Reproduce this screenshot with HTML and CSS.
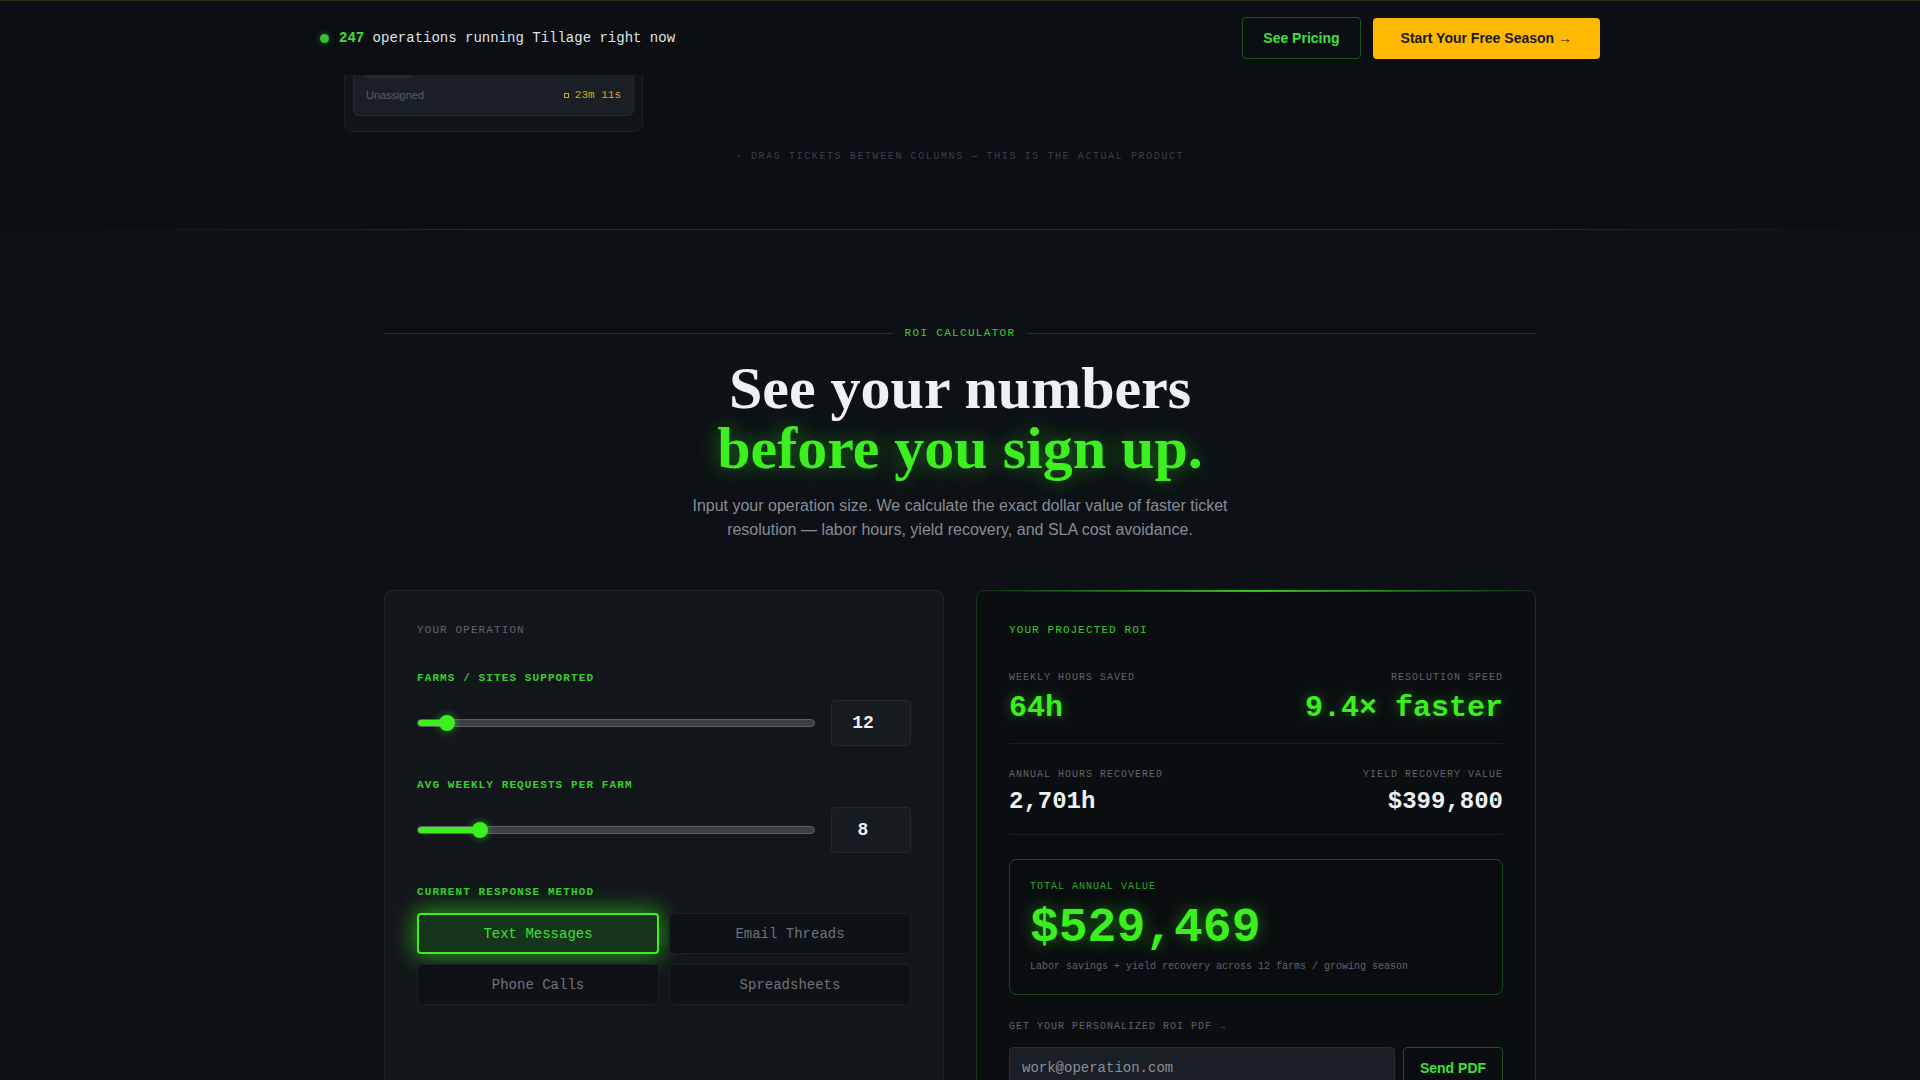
FILE: index.html
```html
<!DOCTYPE html>
<html lang="en">
<head>
  <meta charset="UTF-8" />
  <meta name="viewport" content="width=device-width, initial-scale=1.0" />
  <title>Tillage — ROI Calculator</title>
  <link rel="stylesheet" href="styles.css">
</head>
<body>
  <header class="topbar">
    <div class="topbar-inner">
      <div class="live">
        <span class="live-dot"></span>
        <span><strong>247</strong> operations running Tillage right now</span>
      </div>
      <div class="topbar-actions">
        <a class="btn btn-outline" href="#pricing">See Pricing</a>
        <a class="btn btn-amber" href="#start">Start Your Free Season →</a>
      </div>
    </div>
  </header>

  <section class="demo">
    <div class="demo-inner">
      <div class="board">
        <div class="board-col">
          <div class="ticket">
            <div class="ticket-tags">
              <span class="tag">Pivot 7</span>
              <span class="tag-meta">··</span>
            </div>
            <div class="ticket-foot">
              <span class="ticket-owner">Unassigned</span>
              <span class="ticket-timer"><i class="timer-icon"></i>23m 11s</span>
            </div>
          </div>
        </div>
      </div>
      <p class="demo-caption">· Drag tickets between columns — this is the actual product</p>
    </div>
  </section>
  <div class="rule"></div>

  <section class="roi">
    <div class="eyebrow"><span>ROI Calculator</span></div>
    <h2 class="roi-heading">See your numbers<br><span class="glow">before you sign up.</span></h2>
    <p class="roi-sub">Input your operation size. We calculate the exact dollar value of faster ticket resolution — labor hours, yield recovery, and SLA cost avoidance.</p>

    <div class="roi-grid">
      <div class="card card-input">
        <div class="card-title">Your Operation</div>

        <div class="field">
          <label class="field-label" for="farms">Farms / Sites Supported</label>
          <div class="slider-row">
            <input class="range" id="farms" type="range" min="1" max="200" value="12" style="--fill: 7.3%">
            <input class="num" type="text" value="12">
          </div>
        </div>

        <div class="field">
          <label class="field-label" for="requests">Avg Weekly Requests per Farm</label>
          <div class="slider-row">
            <input class="range" id="requests" type="range" min="1" max="50" value="8" style="--fill: 15.7%">
            <input class="num" type="text" value="8">
          </div>
        </div>

        <div class="field">
          <div class="field-label field-label-tight">Current Response Method</div>
          <div class="methods">
            <button class="method active">Text Messages</button>
            <button class="method">Email Threads</button>
            <button class="method">Phone Calls</button>
            <button class="method">Spreadsheets</button>
          </div>
        </div>
      </div>

      <div class="card card-output">
        <div class="card-title card-title-green">Your Projected ROI</div>

        <div class="stat-row">
          <div class="stat">
            <div class="stat-label">Weekly Hours Saved</div>
            <div class="stat-value stat-big green">64h</div>
          </div>
          <div class="stat stat-right">
            <div class="stat-label">Resolution Speed</div>
            <div class="stat-value stat-big green">9.4× faster</div>
          </div>
        </div>

        <div class="stat-row">
          <div class="stat">
            <div class="stat-label">Annual Hours Recovered</div>
            <div class="stat-value stat-mid">2,701h</div>
          </div>
          <div class="stat stat-right">
            <div class="stat-label">Yield Recovery Value</div>
            <div class="stat-value stat-mid">$399,800</div>
          </div>
        </div>

        <div class="total">
          <div class="total-label">Total Annual Value</div>
          <div class="total-value">$529,469</div>
          <div class="total-note">Labor savings + yield recovery across 12 farms / growing season</div>
        </div>

        <div class="pdf-label">Get your personalized ROI PDF →</div>
        <form class="pdf-form">
          <input class="pdf-email" type="email" placeholder="work@operation.com">
          <button class="pdf-send" type="button">Send PDF</button>
        </form>
      </div>
    </div>
  </section>
</body>
</html>
```

FILE: styles.css
```css
:root {
  --green: #3bf01e;
  --green-label: #38cf2c;
  --mono: "Liberation Mono", "DejaVu Sans Mono", monospace;
  --sans: "Liberation Sans", Arial, sans-serif;
  --serif: "Liberation Serif", "Times New Roman", serif;
}

* {
  box-sizing: border-box;
}

body {
  margin: 0;
  background-color: #0d1116;
  color: #e6e9ec;
  font-family: var(--sans);
}

/* top bar */
.topbar {
  position: fixed;
  top: 0;
  left: 0;
  right: 0;
  z-index: 10;
  height: 75px;
  background-color: #0b0e12;
  border-top: 1px solid #332e1c;
}

.topbar-inner {
  max-width: 1280px;
  height: 100%;
  margin: 0 auto;
  display: flex;
  align-items: center;
  justify-content: space-between;
}

.live {
  display: flex;
  align-items: center;
  gap: 10px;
  font-family: var(--mono);
  font-size: 14px;
  color: #dfe3e6;
}

.live strong {
  color: #3ee03a;
}

.live-dot {
  width: 9px;
  height: 9px;
  border-radius: 50%;
  background-color: #35c035;
  box-shadow: 0 0 6px rgba(53, 192, 53, 0.5);
}

.topbar-actions {
  display: flex;
  gap: 12px;
}

.btn {
  display: inline-block;
  font-family: var(--sans);
  font-size: 14px;
  font-weight: 700;
  line-height: 16px;
  text-decoration: none;
  border-radius: 4px;
}

.btn-outline {
  padding: 12px 20px;
  color: #3ee03a;
  border: 1px solid #1f5222;
}

.btn-amber {
  padding: 12px 28px;
  margin-top: 1px;
  background-color: #ffb800;
  color: #1a1a1a;
}

/* product demo tail */
.demo {
  background-color: #0b0e12;
  background-image: radial-gradient(circle, rgba(70, 190, 70, 0.08) 1px, transparent 1.6px);
  background-size: 40px 40px;
  background-position: 23px 22px;
}

.demo-inner {
  max-width: 1280px;
  margin: 0 auto;
  padding: 39px 0 64px;
}

.board {
  display: flex;
  padding-left: 24px;
}

.board-col {
  width: 299px;
  padding: 8px 8px 15px;
  background-color: #101419;
  border: 1px solid #1a2026;
  border-radius: 8px;
}

.ticket {
  padding: 12px 12px 12px;
  background-color: #1a1f25;
  border: 1px solid #232a30;
  border-radius: 6px;
}

.ticket-tags {
  display: flex;
  align-items: center;
  gap: 8px;
  height: 18px;
  margin-bottom: 8px;
}

.tag {
  padding: 2px 8px;
  font-size: 10px;
  color: #6a7178;
  background-color: #262c33;
  border-radius: 3px;
  filter: blur(1px);
}

.tag-meta {
  font-size: 10px;
  color: #4a5158;
}

.ticket-foot {
  display: flex;
  justify-content: space-between;
  align-items: center;
  height: 16px;
}

.ticket-owner {
  font-size: 11px;
  color: #565d64;
}

.ticket-timer {
  display: flex;
  align-items: center;
  gap: 6px;
  font-family: var(--mono);
  font-size: 11px;
  color: #d9a522;
}

.timer-icon {
  width: 5px;
  height: 5px;
  border: 1px solid #d9a522;
}

.demo-caption {
  margin: 17px 0 0;
  text-align: center;
  font-family: var(--mono);
  font-size: 10px;
  line-height: 16px;
  letter-spacing: 0.16em;
  text-transform: uppercase;
  color: #3a4149;
}

.rule {
  height: 1px;
  background: linear-gradient(90deg, transparent 5%, #1f3022 25%, #1f3022 80%, transparent 96%);
}

/* roi calculator */
.roi {
  max-width: 1152px;
  margin: 0 auto;
  padding-top: 96px;
}

.eyebrow {
  display: flex;
  align-items: center;
  gap: 12px;
  margin-bottom: 18px;
  font-family: var(--mono);
  font-size: 11px;
  line-height: 14px;
  letter-spacing: 0.12em;
  text-transform: uppercase;
  color: #3ed12f;
}

.eyebrow::before,
.eyebrow::after {
  content: "";
  flex: 1;
  height: 1px;
  background-color: #1b3a1e;
}

.roi-heading {
  margin: 0 0 16px;
  text-align: center;
  font-family: var(--serif);
  font-size: 60px;
  font-weight: 700;
  line-height: 60px;
  color: #eef0f2;
}

.glow {
  color: var(--green);
  text-shadow: 0 0 22px rgba(59, 240, 30, 0.45);
}

.roi-sub {
  max-width: 560px;
  margin: 0 auto 48px;
  text-align: center;
  font-size: 16px;
  line-height: 24px;
  color: #868c94;
}

.roi-grid {
  display: grid;
  grid-template-columns: 1fr 1fr;
  gap: 32px;
}

.card {
  padding: 31px 32px 40px;
  border-radius: 8px;
}

.card-input {
  background-color: #13171b;
  border: 1px solid #1e2429;
}

.card-output {
  position: relative;
  background-color: #0b0e11;
  border: 1px solid #16321b;
}

.card-output::before {
  content: "";
  position: absolute;
  top: -1px;
  left: 8px;
  right: 8px;
  height: 2px;
  background: linear-gradient(90deg, transparent, #3bf01e 50%, transparent);
  opacity: 0.8;
}

.card-title {
  margin-bottom: 32px;
  font-family: var(--mono);
  font-size: 11px;
  line-height: 16px;
  letter-spacing: 0.1em;
  text-transform: uppercase;
  color: #5c636b;
}

.card-title-green {
  margin-bottom: 33px;
  color: var(--green-label);
}

.field {
  margin-bottom: 31px;
}

.field-label {
  display: block;
  margin-bottom: 14px;
  font-family: var(--mono);
  font-size: 11px;
  font-weight: 700;
  line-height: 16px;
  letter-spacing: 0.1em;
  text-transform: uppercase;
  color: var(--green-label);
}

.field-label-tight {
  margin-bottom: 13px;
}

.slider-row {
  display: flex;
  align-items: center;
  gap: 16px;
}

.range {
  -webkit-appearance: none;
  appearance: none;
  flex: 1;
  min-width: 0;
  height: 8px;
  margin: 0;
  border: 1px solid #5b6065;
  border-radius: 4px;
  background: linear-gradient(90deg, var(--green) var(--fill), #3b3f44 var(--fill));
  outline: none;
}

.range::-webkit-slider-thumb {
  -webkit-appearance: none;
  width: 16px;
  height: 16px;
  border: none;
  border-radius: 50%;
  background-color: var(--green);
  box-shadow: 0 0 8px rgba(59, 240, 30, 0.55);
}

.num {
  width: 80px;
  height: 46px;
  padding: 0 16px 0 0;
  text-align: center;
  font-family: var(--mono);
  font-size: 18px;
  font-weight: 700;
  color: #eef0f2;
  background-color: #171c21;
  border: 1px solid #1f2b26;
  border-radius: 4px;
  outline: none;
}

.methods {
  display: grid;
  grid-template-columns: 1fr 1fr;
  gap: 10px;
}

.method {
  height: 41px;
  font-family: var(--mono);
  font-size: 14px;
  color: #6d737a;
  background-color: #0e1216;
  border: 1px solid #1b2025;
  border-radius: 4px;
  cursor: pointer;
}

.method.active {
  color: #3ee03a;
  background-color: #17351a;
  border: 2px solid #3bf01e;
  box-shadow: 0 0 22px 3px rgba(59, 240, 30, 0.55);
}

/* results */
.stat-row {
  display: flex;
  justify-content: space-between;
  padding-bottom: 17px;
  margin-bottom: 24px;
  border-bottom: 1px solid #1a1f24;
}

.stat-right {
  text-align: right;
}

.stat-label {
  font-family: var(--mono);
  font-size: 10px;
  line-height: 14px;
  letter-spacing: 0.1em;
  text-transform: uppercase;
  color: #5c636b;
}

.stat-value {
  font-family: var(--mono);
  font-weight: 700;
}

.stat-big {
  margin-top: 5px;
  font-size: 30px;
  line-height: 36px;
}

.stat-mid {
  margin-top: 5px;
  font-size: 24px;
  line-height: 30px;
  color: #eef0f2;
}

.green {
  color: var(--green);
  text-shadow: 0 0 12px rgba(59, 240, 30, 0.4);
}

.total {
  padding: 20px;
  margin-bottom: 25px;
  background-color: #0a0d10;
  border: 1px solid #1d4420;
  border-radius: 8px;
}

.total-label {
  font-family: var(--mono);
  font-size: 10px;
  line-height: 14px;
  letter-spacing: 0.1em;
  text-transform: uppercase;
  color: #2fa82f;
}

.total-value {
  margin-top: 8px;
  font-family: var(--mono);
  font-size: 48px;
  font-weight: 700;
  line-height: 52px;
  color: var(--green);
  text-shadow: 0 0 16px rgba(59, 240, 30, 0.45);
}

.total-note {
  margin-top: 6px;
  font-family: var(--mono);
  font-size: 10px;
  line-height: 14px;
  color: #5c636b;
}

.pdf-label {
  margin-bottom: 13px;
  font-family: var(--mono);
  font-size: 10px;
  line-height: 14px;
  letter-spacing: 0.1em;
  text-transform: uppercase;
  color: #5c636b;
}

.pdf-form {
  display: flex;
  gap: 8px;
  margin: 0;
}

.pdf-email {
  flex: 1;
  height: 42px;
  padding: 0 12px;
  font-family: var(--mono);
  font-size: 14px;
  color: #e6e9ec;
  background-color: #1a1f25;
  border: 1px solid #272e35;
  border-radius: 4px;
  outline: none;
}

.pdf-email::placeholder {
  color: #8a9098;
}

.pdf-send {
  width: 100px;
  height: 42px;
  font-family: var(--sans);
  font-size: 14px;
  font-weight: 700;
  color: #3ee03a;
  background: transparent;
  border: 1px solid #1f5222;
  border-radius: 4px;
  cursor: pointer;
}
```
